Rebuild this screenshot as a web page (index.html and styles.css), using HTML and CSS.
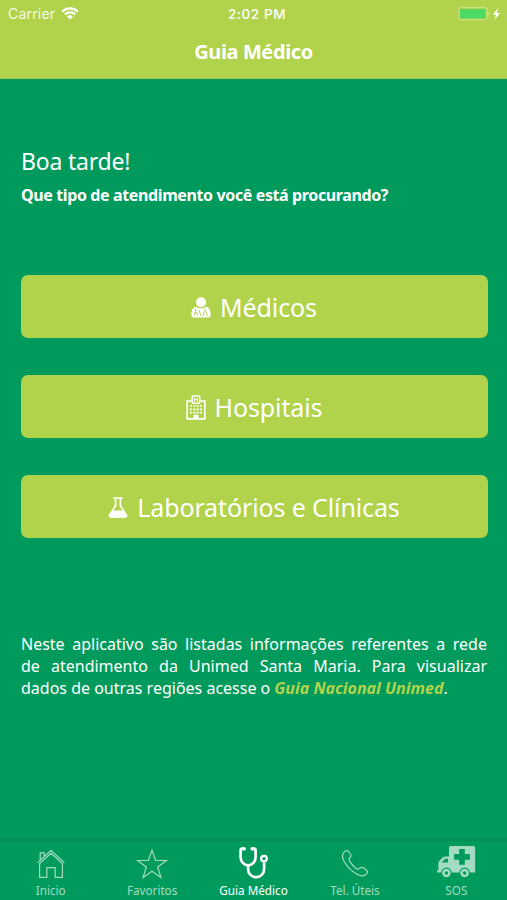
FILE: index.html
```html
<!DOCTYPE html>
<html lang="pt-BR">
<head>
    <meta charset="UTF-8">
    <meta name="viewport" content="width=device-width, initial-scale=1.0">
    <title>Guia Médico</title>
    <link rel="stylesheet" href="styles.css">
</head>
<body>
    <header class="header">
        <div class="status-bar">
            <div class="status-left">
                <span class="carrier">Carrier</span>
                <svg class="wifi" width="18" height="13" viewBox="0 0 18 13">
                    <path d="M1.2 4.6a11.2 11.2 0 0 1 15.6 0M3.9 7.4a7.3 7.3 0 0 1 10.2 0" fill="none" stroke="#fff" stroke-width="2.2"/>
                    <path d="M9 12.6L5.9 9.5a4.4 4.4 0 0 1 6.2 0z" fill="#fff"/>
                </svg>
            </div>
            <span class="clock">2:02 PM</span>
            <div class="status-right">
                <svg width="44" height="14" viewBox="0 0 44 14">
                    <rect x=".6" y=".6" width="28.6" height="12.2" rx="2.6" fill="none" stroke="#cfe48c" stroke-width="1"/>
                    <rect x="2" y="2" width="25.4" height="9.6" rx="1.2" fill="#4cd964"/>
                    <path d="M30.4 5a2 2 0 0 1 0 3.6z" fill="#d8e9a4"/>
                    <path d="M40 1L35 7.8h3L36.6 13l5.4-7h-3z" fill="#fff"/>
                </svg>
            </div>
        </div>
        <h1 class="title">Guia Médico</h1>
    </header>

    <main class="content">
        <h2 class="greeting">Boa tarde!</h2>
        <p class="question">Que tipo de atendimento você está procurando?</p>

        <div class="buttons">
            <button class="button">
                <svg width="20" height="21" viewBox="0 0 20 21">
                    <circle cx="10" cy="5.2" r="5" fill="#fff"/>
                    <path d="M4.6 9.6Q10 13.4 15.4 9.6Q19.6 11.4 19.6 17.4Q19.6 20.6 17 20.6H3Q.4 20.6.4 17.4Q.4 11.4 4.6 9.6z" fill="#fff"/>
                    <path d="M4.6 11.5v3.2M3.4 18.2v-1.4a1.4 1.4 0 0 1 2.8 0v1.4M7.8 13l2.4 6.2M14.2 11.5v2.8M12.4 19v-2.4a1.8 1.8 0 0 1 3.6 0V19" fill="none" stroke="#b1d34b" stroke-width="1"/>
                </svg>
                <span>Médicos</span>
            </button>
            <button class="button">
                <svg width="20" height="25" viewBox="0 0 20 25">
                    <path d="M5.6 6H1.2v17.8h17.6V6h-4.4" fill="none" stroke="#fff" stroke-width="1.7"/>
                    <rect x="6.2" y="1" width="7.6" height="7.2" rx="1" fill="none" stroke="#fff" stroke-width="1.6"/>
                    <path d="M8.5 2.8v3.8M11.5 2.8v3.8M8.5 4.7h3" stroke="#fff" stroke-width="1" fill="none"/>
                    <path d="M4 11h12M4 14.3h12M4 17.6h12" stroke="#fff" stroke-width="1.7" stroke-dasharray="2.1 1.2"/>
                    <path d="M5 23.6h3v-3.4h4v3.4h3" fill="none" stroke="#fff" stroke-width="1"/>
                    <path d="M8 24v-3.8h4V24" fill="#fff"/>
                </svg>
                <span>Hospitais</span>
            </button>
            <button class="button">
                <svg width="20" height="21" viewBox="0 0 20 21">
                    <path d="M5.2 1h9.6M7.6 1v7.8L1.6 18.2q-.6 1.6 1 1.6h14.8q1.6 0 1-1.6L12.4 8.8V1" fill="none" stroke="#fff" stroke-width="1.7"/>
                    <path d="M5 13.4h10l3.8 5.6-.8 1.6H2l-.8-1.6z" fill="#fff"/>
                </svg>
                <span>Laboratórios e Clínicas</span>
            </button>
        </div>

        <div class="info">
            <div class="line">Neste aplicativo são listadas informações referentes a rede</div>
            <div class="line">de atendimento da Unimed Santa Maria. Para visualizar</div>
            <div class="last"><span>dados de outras regiões acesse o</span><a class="link">Guia Nacional Unimed</a><span>.</span></div>
        </div>
    </main>

    <nav class="tabs">
        <a class="tab">
            <svg width="30" height="32" viewBox="0 0 30 32">
                <path d="M1.6 15.6L15 3.6l13.4 12M3.6 16.5V30.3h7.2V20.6h8.4v9.7h7.2V16.5L15 6.2zM4.2 13V5.8h4v3.5" fill="none" stroke="currentColor" stroke-width="1.2"/>
            </svg>
            <span>Inicio</span>
        </a>
        <a class="tab">
            <svg width="32" height="32" viewBox="0 0 32 32">
                <path d="M16 3.2l3.6 10.1 10.8.2-8.7 6.5 3.2 10.4-8.9-6.2-8.9 6.2 3.2-10.4-8.7-6.5 10.8-.2z" fill="none" stroke="currentColor" stroke-width="1.2"/>
            </svg>
            <span>Favoritos</span>
        </a>
        <a class="tab active">
            <svg width="32" height="34" viewBox="0 0 32 34">
                <path d="M6.2 2.7H4.3Q2.6 2.7 2.6 4.5V11a7.5 8.3 0 0 0 15 0V4.5Q17.6 2.7 15.9 2.7H14M10.1 19.3v3.9a8 8 0 0 0 16 0v-6.8" fill="none" stroke="currentColor" stroke-width="2.7"/>
                <circle cx="6" cy="2.8" r="1.9" fill="currentColor"/>
                <circle cx="14.3" cy="2.8" r="1.9" fill="currentColor"/>
                <circle cx="26" cy="12.6" r="2.8" fill="none" stroke="currentColor" stroke-width="2.3"/>
            </svg>
            <span>Guia Médico</span>
        </a>
        <a class="tab">
            <svg width="28" height="30" viewBox="0 0 28 30">
                <path d="M2.3 5.2Q4.2 2.2 6.5 2.7Q9.4 4.5 10 7.4Q10.2 8.5 8.7 9.8Q7.5 11.4 8.6 13.1Q11.8 18.2 15.6 20.7Q17.2 21.5 18.5 20.4Q20.2 18.8 21.7 19.5Q24.7 21 26.4 23.4Q27 25.3 24.2 27Q20.8 29 16.6 26.6Q7.8 22 3 13Q.4 8.5 2.3 5.2z" fill="none" stroke="currentColor" stroke-width="1.2"/>
            </svg>
            <span>Tel. Úteis</span>
        </a>
        <a class="tab">
            <svg width="40" height="34" viewBox="0 0 40 34">
                <path fill="currentColor" fill-rule="evenodd" d="M14.7 0H37.4Q39.2 0 39.2 1.8V26.6h-5.4a5.2 5.2 0 0 0-10.4 0h-7.8a5.2 5.2 0 0 0-10.4 0H1V24.6h1.4v-7.1Q2.4 16 3.6 14.5L6.8 11.4Q8 10.5 9.4 10.5H13V1.8Q13 0 14.7 0zM5.5 16.5H12V12.8H9.4z"/>
                <path fill="#009b5c" d="M23.2 3h5.6v5.1h5.1v5.6h-5.1v5.1h-5.6v-5.1h-5.1V8.1h5.1z"/>
                <circle cx="10.4" cy="27" r="3" fill="none" stroke="currentColor" stroke-width="2.6"/>
                <circle cx="28.6" cy="27" r="3" fill="none" stroke="currentColor" stroke-width="2.6"/>
            </svg>
            <span>SOS</span>
        </a>
    </nav>
</body>
</html>
```
FILE: styles.css
```css
* {
    box-sizing: border-box;
}

body {
    margin: 0;
    height: 900px;
    display: flex;
    flex-direction: column;
    background-color: #009b5c;
    color: #fff;
    font-family: "Noto Sans", sans-serif;
    overflow: hidden;
}

.header {
    height: 79px;
    background-color: #b1d34b;
    border-bottom: 1px solid #9cca4c;
}

.status-bar {
    height: 27px;
    display: grid;
    grid-template-columns: 1fr auto 1fr;
    align-items: center;
    padding: 0 5px 0 8px;
    font-family: Inter, sans-serif;
    font-size: 13.5px;
}

.status-left {
    display: flex;
    align-items: center;
    gap: 6px;
}

.carrier {
    font-size: 14px;
    color: #f6fae6;
    letter-spacing: 0.2px;
}

.clock {
    font-weight: 500;
    letter-spacing: 0.6px;
    margin-left: 4px;
}

.status-right {
    display: flex;
    justify-content: flex-end;
}

.title {
    margin: 0;
    font-size: 20px;
    line-height: 50px;
    font-weight: 700;
    text-align: center;
    letter-spacing: -0.4px;
}

.content {
    flex: 1;
    padding: 67px 20px 0 21px;
}

.greeting {
    margin: 0;
    font-size: 23px;
    line-height: 30px;
    font-weight: 400;
    letter-spacing: -0.2px;
}

.question {
    margin: 4px 0 0;
    font-size: 16px;
    line-height: 30px;
    font-weight: 700;
    letter-spacing: -0.38px;
}

.buttons {
    display: flex;
    flex-direction: column;
    gap: 37px;
    margin: 65px -0.5px 0 -0.5px;
}

.button {
    height: 63px;
    display: flex;
    justify-content: center;
    align-items: center;
    gap: 9px;
    padding: 1px 0 0;
    background-color: #b1d34b;
    color: #fff;
    border: none;
    border-radius: 7px;
    font-family: inherit;
    font-size: 25px;
    font-weight: 400;
    letter-spacing: -0.12px;
}

.info {
    margin-top: 95px;
    font-size: 16px;
    line-height: 22px;
}

.line {
    text-align: justify;
    text-align-last: justify;
    white-space: nowrap;
}

.last {
    display: flex;
}

.link {
    margin-left: 4px;
    color: #b1d34b;
    font-style: italic;
    font-weight: 700;
}

.tabs {
    height: 61px;
    display: flex;
    border-top: 2px solid #008f54;
}

.tab {
    flex: 1;
    display: flex;
    flex-direction: column;
    align-items: center;
    color: #a3dcc2;
    font-size: 11.7px;
    line-height: 14px;
}

.tab svg {
    height: 34px;
    margin: 5px 0 3px;
}

.tab.active {
    color: #fff;
}
```
